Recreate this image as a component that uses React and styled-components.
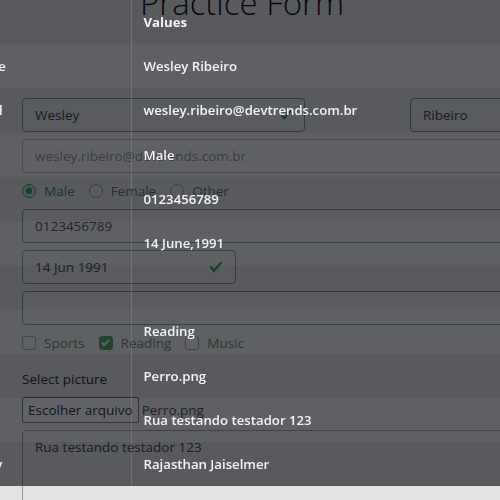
import styled, { createGlobalStyle } from "styled-components";

const GlobalStyle = createGlobalStyle`
  html, body {
    margin: 0;
    padding: 0;
    background: #e3e3e3;
    overflow: hidden;
    font-family: "Open Sans", "Liberation Sans", sans-serif;
  }
`;

const submitted = [
  ["Label", "Values"],
  ["Student Name", "Wesley Ribeiro"],
  ["Student Email", "wesley.ribeiro@devtrends.com.br"],
  ["Gender", "Male"],
  ["Mobile", "0123456789"],
  ["Date of Birth", "14 June,1991"],
  ["Subjects", ""],
  ["Hobbies", "Reading"],
  ["Picture", "Perro.png"],
  ["Address", "Rua testando testador 123"],
  ["State and City", "Rajasthan Jaiselmer"],
];

function Check({ size = 12 }) {
  return (
    <svg width={size} height={size} viewBox="0 0 8 8">
      <path
        fill="#3d9a58"
        d="M2.3 6.73L.6 4.53c-.4-1.04.46-1.4 1.1-.8l1.1 1.4 3.4-3.8c.6-.63 1.6-.27 1.2.7l-4 4.6c-.43.5-.8.4-1.1.1z"
      />
    </svg>
  );
}

export default function App() {
  return (
    <>
      <GlobalStyle />
      <Page>
        <Title>Practice Form</Title>
        <Fields>
          <Row>
            <Input $w={283} $valid>
              Wesley
              <Check />
            </Input>
            <Input $w={200} $valid style={{ marginLeft: 105 }}>
              Ribeiro
            </Input>
          </Row>
          <Input $w={520} $light>
            wesley.ribeiro@devtrends.com.br
          </Input>
          <Choices>
            <Choice>
              <Radio $on />
              Male
            </Choice>
            <Choice>
              <Radio />
              Female
            </Choice>
            <Choice>
              <Radio />
              Other
            </Choice>
          </Choices>
          <Input $w={520} $valid>
            0123456789
          </Input>
          <Input $w={214} $valid>
            14 Jun 1991
            <Check size={14} />
          </Input>
          <Input $w={520} $valid />
          <Choices>
            <Choice>
              <Box />
              Sports
            </Choice>
            <Choice>
              <Box $on>
                <svg width="9" height="9" viewBox="0 0 8 8">
                  <path
                    fill="#d8e8dc"
                    d="M6.56 0l-3.8 3.8-1.3-1.3L0 3.9l2.8 2.8 5.2-5.2z"
                  />
                </svg>
              </Box>
              Reading
            </Choice>
            <Choice>
              <Box />
              Music
            </Choice>
          </Choices>
          <FieldLabel>Select picture</FieldLabel>
          <FileRow>
            <FileButton>Escolher arquivo</FileButton>
            Perro.png
          </FileRow>
          <TextArea>Rua testando testador 123</TextArea>
        </Fields>
      </Page>

      <Modal>
        <tbody>
          {submitted.map(([label, value], i) => (
            <Tr key={label} $odd={i % 2 === 1}>
              <LabelCell $head={i === 0}>{label}</LabelCell>
              <ValueCell $head={i === 0}>{value}</ValueCell>
            </Tr>
          ))}
        </tbody>
      </Modal>
    </>
  );
}

const Page = styled.div`
  padding-left: 22px;
  width: 600px;
`;

const Title = styled.h1`
  margin: -17px 0 75px 118px;
  font-size: 33px;
  line-height: 40px;
  font-weight: 300;
  color: #111;
`;

const Fields = styled.div`
  display: flex;
  flex-direction: column;
  gap: 7px;
  font-size: 13.5px;
`;

const Row = styled.div`
  display: flex;
`;

const Input = styled.div`
  box-sizing: border-box;
  width: ${(p) => p.$w}px;
  height: 34px;
  padding: 0 12px;
  display: flex;
  align-items: center;
  justify-content: space-between;
  border: 1px solid ${(p) => (p.$valid ? "#7d9486" : "#a9acae")};
  border-radius: 4px;
  color: ${(p) => (p.$light ? "#80868c" : "#3e444b")};
  background: #e6e6e6;
`;

const Choices = styled.div`
  display: flex;
  align-items: center;
  gap: 14px;
  height: 22px;
  color: #4d7f5e;
`;

const Choice = styled.label`
  display: flex;
  align-items: center;
  gap: 8px;
`;

const Radio = styled.span`
  box-sizing: border-box;
  width: 14px;
  height: 14px;
  border-radius: 50%;
  border: 1px solid ${(p) => (p.$on ? "#3d9a58" : "#8aa394")};
  background: ${(p) =>
    p.$on ? "radial-gradient(circle, #3d9a58 0 3px, #c9dccf 3.5px)" : "#e6e6e6"};
`;

const Box = styled.span`
  box-sizing: border-box;
  width: 14px;
  height: 14px;
  border-radius: 3px;
  border: 1px solid ${(p) => (p.$on ? "#3d9a58" : "#8aa394")};
  background: ${(p) => (p.$on ? "#3d9a58" : "#e6e6e6")};
  display: flex;
  align-items: center;
  justify-content: center;
`;

const FieldLabel = styled.div`
  margin-top: 8px;
  height: 20px;
  line-height: 20px;
  color: #2e3236;
`;

const FileRow = styled.div`
  display: flex;
  align-items: center;
  gap: 3px;
  height: 26px;
  margin-top: 1px;
  color: #3a3d40;
`;

const FileButton = styled.span`
  box-sizing: border-box;
  height: 26px;
  padding: 0 5px;
  display: flex;
  align-items: center;
  border: 1px solid #6b6b6b;
  border-radius: 2px;
  background: #ececec;
  color: #202020;
`;

const TextArea = styled.div`
  box-sizing: border-box;
  width: 520px;
  height: 110px;
  padding: 7px 12px;
  border: 1px solid #9a9a9a;
  border-radius: 4px;
  color: #3e444b;
`;

const Modal = styled.table`
  position: fixed;
  top: 0;
  left: -93px;
  width: 593px;
  border-collapse: collapse;
  background: rgba(0, 4, 10, 0.61);
  color: #f4f4f4;
  font-size: 13.2px;
`;

const Tr = styled.tr`
  height: 44.2px;
  background: ${(p) => (p.$odd ? "rgba(255, 255, 255, 0.035)" : "transparent")};
`;

const LabelCell = styled.td`
  box-sizing: border-box;
  width: 224px;
  padding: 0 12px 0 7px;
  border-right: 1px solid rgba(255, 255, 255, 0.13);
  font-weight: ${(p) => (p.$head ? 700 : 600)};
`;

const ValueCell = styled.td`
  padding: 0 12px;
  font-weight: ${(p) => (p.$head ? 700 : 600)};
`;
